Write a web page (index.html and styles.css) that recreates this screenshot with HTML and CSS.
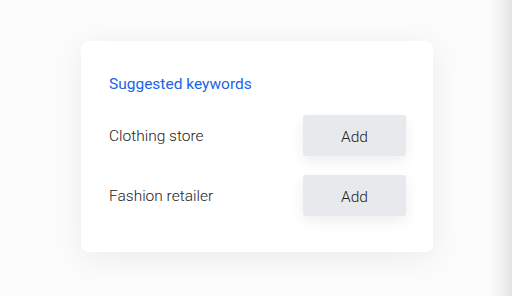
FILE: index.html
```html
<!DOCTYPE html>
<html lang="en">
<head>
    <meta charset="UTF-8">
    <title>Suggested keywords</title>
    <link rel="stylesheet" href="styles.css">
</head>
<body>
    <div class="page">
        <div class="card">
            <div class="card-title">Suggested keywords</div>
            <div class="keyword-row">
                <span class="keyword">Clothing store</span>
                <button class="add-btn">Add</button>
            </div>
            <div class="keyword-row">
                <span class="keyword">Fashion retailer</span>
                <button class="add-btn">Add</button>
            </div>
        </div>
    </div>
</body>
</html>
```

FILE: styles.css
```css
html, body { margin: 0; padding: 0; height: 100%; }
body { font-family: Roboto, "Noto Sans", sans-serif; background: linear-gradient(to right, #fcfcfc 0, #fcfcfc 488px, #f3f3f3 500px, #e4e4e4 512px); overflow: hidden; }
.page { padding: 41px 0 0 81px; }
.card { width: 352px; height: 211px; box-sizing: border-box; background: #fff; border-radius: 7px; box-shadow: 0 6px 34px rgba(0,0,0,0.07); padding: 33px 27px 0 28px; }
.card-title { color: #1a64e6; font-size: 15.5px; line-height: 20px; margin-bottom: 21px; }
.keyword-row { display: flex; align-items: center; justify-content: space-between; height: 41px; margin-bottom: 19px; }
.keyword { color: #222; font-size: 15.5px; font-weight: 300; padding-top: 1px; }
.add-btn { width: 103px; height: 41px; border: none; border-radius: 3px; background: #e8e9ed; color: #222; font-family: inherit; font-size: 15.5px; font-weight: 300; box-shadow: 0 5px 14px rgba(0,0,0,0.07); padding: 3px 0 0; }
```
